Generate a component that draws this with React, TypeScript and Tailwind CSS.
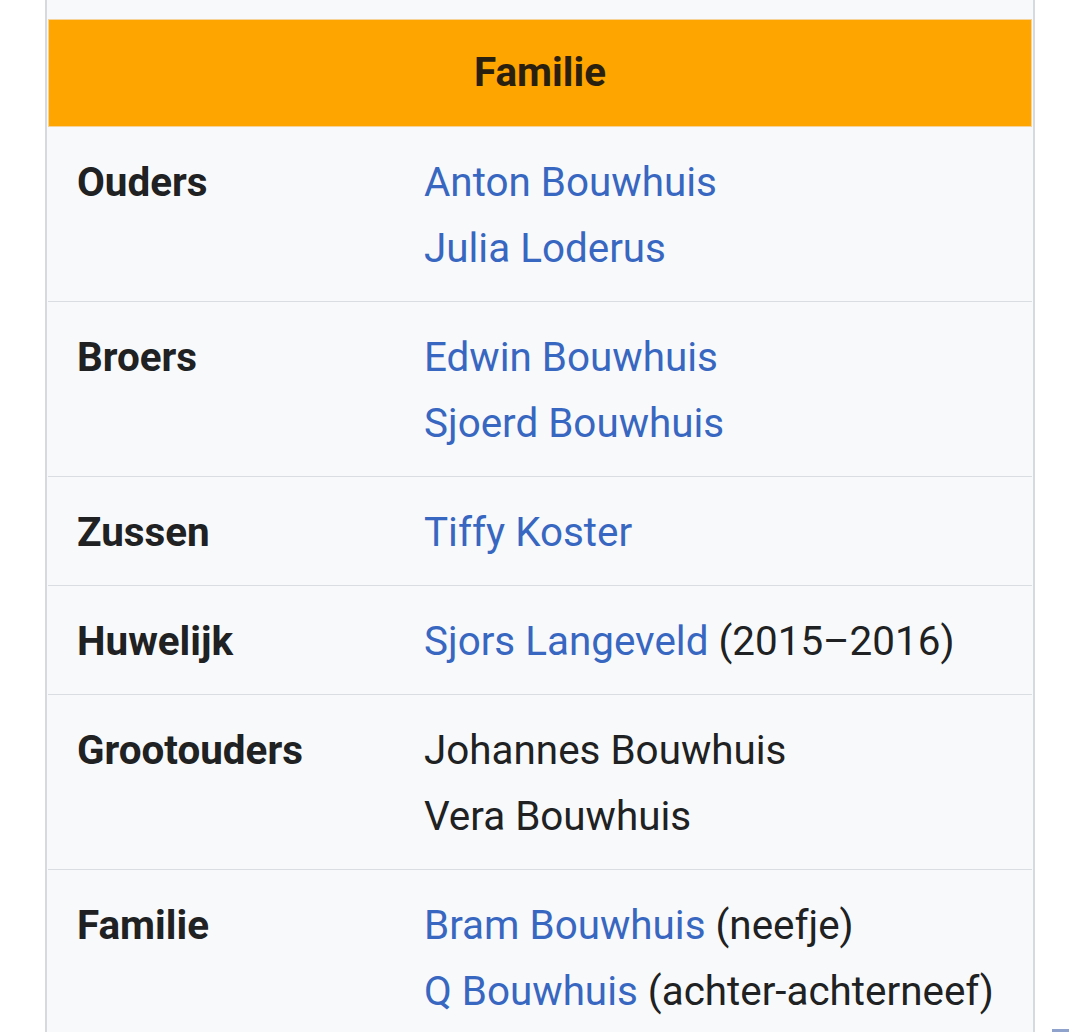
import React from "react";

type Part = { t: string; link?: boolean };
type Row = { label: string; lines: Part[][] };

const rows: Row[] = [
  { label: "Ouders", lines: [[{ t: "Anton Bouwhuis", link: true }], [{ t: "Julia Loderus", link: true }]] },
  { label: "Broers", lines: [[{ t: "Edwin Bouwhuis", link: true }], [{ t: "Sjoerd Bouwhuis", link: true }]] },
  { label: "Zussen", lines: [[{ t: "Tiffy Koster", link: true }]] },
  { label: "Huwelijk", lines: [[{ t: "Sjors Langeveld", link: true }, { t: " (2015–2016)" }]] },
  { label: "Grootouders", lines: [[{ t: "Johannes Bouwhuis" }], [{ t: "Vera Bouwhuis" }]] },
  {
    label: "Familie",
    lines: [
      [{ t: "Bram Bouwhuis", link: true }, { t: " (neefje)" }],
      [{ t: "Q Bouwhuis", link: true }, { t: " (achter-achterneef)" }],
    ],
  },
];

export default function App() {
  return (
    <div
      className="relative w-[1080px] h-[1032px] overflow-hidden bg-white text-[#202122]"
      style={{ fontFamily: "Roboto, 'Noto Sans', Arial, sans-serif" }}
    >
      <div className="ml-[45px] w-[990px] min-h-[1032px] bg-[#f8f9fa] border-x-2 border-[#d6d9dd] px-[1px] pt-[19px]">
        <div className="h-[108px] bg-[#ffa500] border border-[#f6d398] flex items-center justify-center text-[40.4px] font-bold text-[#2a2010]">
          Familie
        </div>
        {rows.map((r, i) => (
          <div
            key={r.label}
            className={`grid grid-cols-[347px_1fr] pt-[23px] pb-[19px] leading-[66px] text-[40.4px] ${
              i < rows.length - 1 ? "border-b border-[#dadde1]" : ""
            }`}
          >
            <div className="pl-[29px] font-bold">{r.label}</div>
            <div className="pl-[29px]">
              {r.lines.map((ln, j) => (
                <div key={j} className="whitespace-nowrap">
                  {ln.map((p, k) =>
                    p.link ? (
                      <span key={k} className="text-[#3867c1]">
                        {p.t}
                      </span>
                    ) : (
                      <span key={k}>{p.t}</span>
                    )
                  )}
                </div>
              ))}
            </div>
          </div>
        ))}
      </div>
      <div className="absolute left-[1052px] top-[1029px] w-[17px] h-[3px] bg-[#8ea2cc]" />
    </div>
  );
}
